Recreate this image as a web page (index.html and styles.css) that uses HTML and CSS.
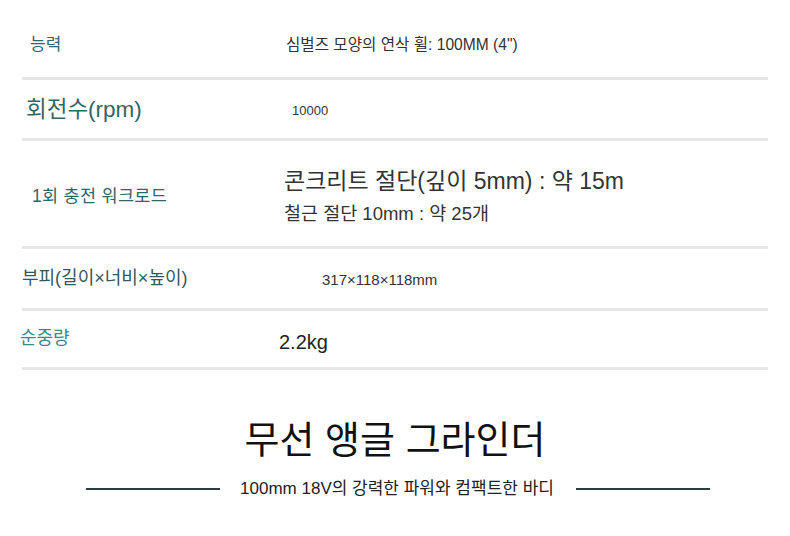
FILE: index.html
```html
<!DOCTYPE html>
<html lang="ko">
<head>
<meta charset="utf-8">
<link rel="stylesheet" href="styles.css">
</head>
<body>
<div class="page">
  <section class="specs">
    <div class="row row-1">
      <div class="label">능력</div>
      <div class="value">심벌즈 모양의 연삭 휠: 100MM (4")</div>
    </div>
    <div class="row row-2">
      <div class="label">회전수(rpm)</div>
      <div class="value">10000</div>
    </div>
    <div class="row row-3">
      <div class="label">1회 충전 워크로드</div>
      <div class="value">
        <div class="line-big">콘크리트 절단(깊이 5mm) : 약 15m</div>
        <div class="line-mid">철근 절단 10mm : 약 25개</div>
      </div>
    </div>
    <div class="row row-4">
      <div class="label">부피(길이×너비×높이)</div>
      <div class="value">317×118×118mm</div>
    </div>
    <div class="row row-5">
      <div class="label">순중량</div>
      <div class="value">2.2kg</div>
    </div>
  </section>
  <section class="hero">
    <h1 class="title">무선 앵글 그라인더</h1>
    <div class="subtitle">
      <span class="rule"></span>
      <span class="sub-text">100mm 18V의 강력한 파워와 컴팩트한 바디</span>
      <span class="rule"></span>
    </div>
  </section>
</div>
</body>
</html>
```
FILE: styles.css
```css
* { box-sizing: border-box; }
html, body { margin: 0; padding: 0; background: #fff; }
body {
  font-family: "Liberation Sans", "Noto Sans CJK KR", sans-serif;
  color: #333;
  width: 790px;
  height: 536px;
  overflow: hidden;
}
.page { width: 790px; }
.specs { padding: 0 22px; }
.row {
  display: flex;
  align-items: center;
  border-bottom: 3px solid #e6e6e6;
}
.label {
  width: 258px;
  flex: none;
  color: #2f6767;
  line-height: 1.2;
  white-space: nowrap;
}
.value { line-height: 1.2; color: #333; white-space: nowrap; }

.row-1 { height: 80px; padding-top: 14px; }
.row-1 .label { font-size: 17px; padding-left: 8px; }
.row-1 .value { font-size: 15.6px; padding-left: 6px; }

.row-2 { height: 61px; }
.row-2 .label { font-size: 22.5px; padding-left: 4px; }
.row-2 .value { font-size: 13px; padding-left: 12px; padding-top: 4px; }

.row-3 { height: 108px; padding-top: 5px; }
.row-3 .label { font-size: 17.5px; padding-left: 10px; letter-spacing: 0.3px; }
.row-3 .value { padding-left: 4px; }
.line-big { font-size: 23px; color: #333; line-height: 28px; }
.line-mid { font-size: 18.5px; color: #333; line-height: 22px; margin-top: 8px; }

.row-4 { height: 62px; }
.row-4 .label { font-size: 18px; color: #33585a; }
.row-4 .value { font-size: 15px; padding-left: 42px; padding-top: 3px; }

.row-5 { height: 59px; }
.row-5 .label { font-size: 18px; color: #3a8a88; margin-left: -2px; width: 259px; }
.row-5 .value { font-size: 20px; padding-top: 6px; color: #222; }

.hero { padding-top: 44px; text-align: center; }
.title {
  margin: 0;
  font-family: "Noto Sans CJK KR", sans-serif;
  font-weight: 400;
  font-size: 38px;
  line-height: 46px;
  color: #111;
}
.subtitle {
  display: flex;
  align-items: center;
  justify-content: center;
  margin-top: 19px;
  padding-left: 6px;
}
.rule {
  width: 134px;
  height: 2px;
  background: #2c3d43;
}
.sub-text {
  font-size: 17px;
  color: #222;
  margin: 0 22px 0 20px;
  line-height: 20px;
}
```
